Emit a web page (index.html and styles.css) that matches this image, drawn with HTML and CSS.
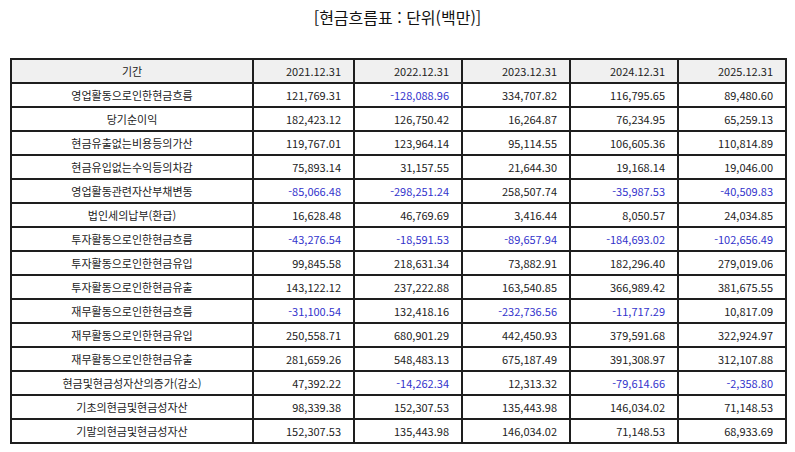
FILE: index.html
```html
<!DOCTYPE html>
<html lang="ko">
<head>
<meta charset="utf-8">
<link rel="stylesheet" href="styles.css">
</head>
<body>
<div class="page">
  <h1 class="title">[현금흐름표 : 단위(백만)]</h1>
  <table class="fin">
    <colgroup>
      <col class="c-label"><col class="c-first"><col class="c-val"><col class="c-val"><col class="c-val"><col class="c-val">
    </colgroup>
    <thead>
      <tr><th class="lbl">기간</th><th>2021.12.31</th><th>2022.12.31</th><th>2023.12.31</th><th>2024.12.31</th><th>2025.12.31</th></tr>
    </thead>
    <tbody>
      <tr><td class="lbl">영업활동으로인한현금흐름</td><td>121,769.31</td><td class="neg">-128,088.96</td><td>334,707.82</td><td>116,795.65</td><td>89,480.60</td></tr>
      <tr><td class="lbl">당기순이익</td><td>182,423.12</td><td>126,750.42</td><td>16,264.87</td><td>76,234.95</td><td>65,259.13</td></tr>
      <tr><td class="lbl">현금유출없는비용등의가산</td><td>119,767.01</td><td>123,964.14</td><td>95,114.55</td><td>106,605.36</td><td>110,814.89</td></tr>
      <tr><td class="lbl">현금유입없는수익등의차감</td><td>75,893.14</td><td>31,157.55</td><td>21,644.30</td><td>19,168.14</td><td>19,046.00</td></tr>
      <tr><td class="lbl">영업활동관련자산부채변동</td><td class="neg">-85,066.48</td><td class="neg">-298,251.24</td><td>258,507.74</td><td class="neg">-35,987.53</td><td class="neg">-40,509.83</td></tr>
      <tr><td class="lbl">법인세의납부(환급)</td><td>16,628.48</td><td>46,769.69</td><td>3,416.44</td><td>8,050.57</td><td>24,034.85</td></tr>
      <tr><td class="lbl">투자활동으로인한현금흐름</td><td class="neg">-43,276.54</td><td class="neg">-18,591.53</td><td class="neg">-89,657.94</td><td class="neg">-184,693.02</td><td class="neg">-102,656.49</td></tr>
      <tr><td class="lbl">투자활동으로인한현금유입</td><td>99,845.58</td><td>218,631.34</td><td>73,882.91</td><td>182,296.40</td><td>279,019.06</td></tr>
      <tr><td class="lbl">투자활동으로인한현금유출</td><td>143,122.12</td><td>237,222.88</td><td>163,540.85</td><td>366,989.42</td><td>381,675.55</td></tr>
      <tr><td class="lbl">재무활동으로인한현금흐름</td><td class="neg">-31,100.54</td><td>132,418.16</td><td class="neg">-232,736.56</td><td class="neg">-11,717.29</td><td>10,817.09</td></tr>
      <tr><td class="lbl">재무활동으로인한현금유입</td><td>250,558.71</td><td>680,901.29</td><td>442,450.93</td><td>379,591.68</td><td>322,924.97</td></tr>
      <tr><td class="lbl">재무활동으로인한현금유출</td><td>281,659.26</td><td>548,483.13</td><td>675,187.49</td><td>391,308.97</td><td>312,107.88</td></tr>
      <tr><td class="lbl">현금및현금성자산의증가(감소)</td><td>47,392.22</td><td class="neg">-14,262.34</td><td>12,313.32</td><td class="neg">-79,614.66</td><td class="neg">-2,358.80</td></tr>
      <tr><td class="lbl">기초의현금및현금성자산</td><td>98,339.38</td><td>152,307.53</td><td>135,443.98</td><td>146,034.02</td><td>71,148.53</td></tr>
      <tr><td class="lbl">기말의현금및현금성자산</td><td>152,307.53</td><td>135,443.98</td><td>146,034.02</td><td>71,148.53</td><td>68,933.69</td></tr>
    </tbody>
  </table>
</div>
</body>
</html>
```

FILE: styles.css
```css
html, body {
  margin: 0;
  padding: 0;
  background: #ffffff;
}

body {
  font-family: "Noto Sans CJK KR", "Noto Sans", sans-serif;
  color: #222;
}

.page {
  padding: 0 10px;
}

.title {
  margin: 0 0 24px 0;
  height: 34px;
  line-height: 34px;
  font-size: 16px;
  font-weight: 400;
  text-align: center;
  color: #111;
}

.fin {
  width: 775px;
  table-layout: fixed;
  border-collapse: collapse;
  font-size: 11px;
}

.c-label { width: 242px; }
.c-first { width: 101px; }
.c-val { width: 108px; }

.fin th,
.fin td {
  border: 2px solid #1e1e1e;
  height: 24px;
  padding: 0 12px 0 4px;
  line-height: 20px;
  text-align: right;
  white-space: nowrap;
  font-weight: 400;
  box-sizing: border-box;
}

.fin thead th {
  background: #f0f0f0;
}

.fin .lbl {
  text-align: center;
  padding: 0 4px;
}

.fin .neg {
  color: #3333cc;
}
```
